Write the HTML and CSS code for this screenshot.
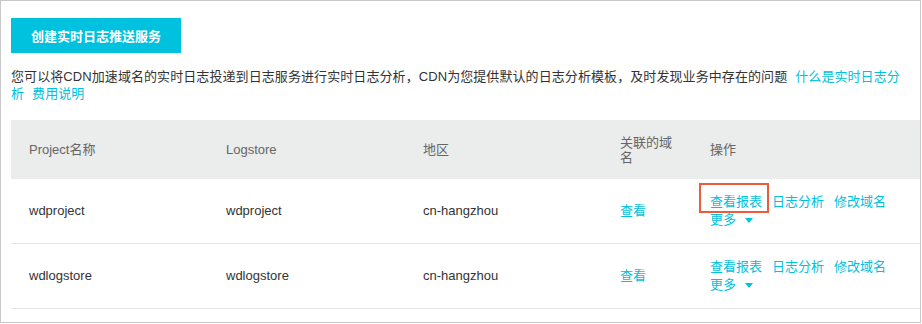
FILE: index.html
```html
<!DOCTYPE html>
<html lang="zh-CN">
<head>
    <meta charset="UTF-8">
    <meta name="viewport" content="width=device-width, initial-scale=1.0">
    <title>实时日志推送</title>
    <link rel="stylesheet" href="styles.css">
</head>
<body>
    <div class="panel">
        <button class="primary-button">创建实时日志推送服务</button>

        <p class="intro">您可以将CDN加速域名的实时日志投递到日志服务进行实时日志分析，CDN为您提供默认的日志分析模板，及时发现业务中存在的问题<a class="link intro-link" href="#">什么是实时日志分析</a><a class="link intro-link" href="#">费用说明</a></p>

        <table class="log-table">
            <colgroup>
                <col class="col-project">
                <col class="col-logstore">
                <col class="col-region">
                <col class="col-domain">
                <col class="col-actions">
            </colgroup>
            <thead>
                <tr>
                    <th>Project名称</th>
                    <th>Logstore</th>
                    <th>地区</th>
                    <th>关联的域名</th>
                    <th>操作</th>
                </tr>
            </thead>
            <tbody>
                <tr>
                    <td>wdproject</td>
                    <td>wdproject</td>
                    <td>cn-hangzhou</td>
                    <td><a class="link" href="#">查看</a></td>
                    <td class="actions"><a class="link action marked" href="#">查看报表<span class="mark"></span></a><a class="link action" href="#">日志分析</a><a class="link action" href="#">修改域名</a><a class="link action more" href="#">更多<span class="caret"></span></a></td>
                </tr>
                <tr>
                    <td>wdlogstore</td>
                    <td>wdlogstore</td>
                    <td>cn-hangzhou</td>
                    <td><a class="link" href="#">查看</a></td>
                    <td class="actions"><a class="link action" href="#">查看报表</a><a class="link action" href="#">日志分析</a><a class="link action" href="#">修改域名</a><a class="link action more" href="#">更多<span class="caret"></span></a></td>
                </tr>
            </tbody>
        </table>
    </div>
</body>
</html>
```

FILE: styles.css
```css
body {
    margin: 0;
    font-family: "Liberation Sans", Arial, "Noto Sans CJK SC", sans-serif;
    font-size: 13px;
    color: #333;
    background: #fff;
}
.panel {
    box-sizing: border-box;
    width: 921px;
    height: 323px;
    border: 1px solid #c8c8c8;
    padding: 17px 0 0 10px;
    overflow: hidden;
}
.primary-button {
    display: block;
    width: 170px;
    height: 35px;
    padding: 0;
    background-color: #00c1de;
    color: #fff;
    border: none;
    font-family: inherit;
    font-size: 13px;
    font-weight: bold;
    cursor: pointer;
}
.intro {
    margin: 15px 0 18px;
    line-height: 17px;
    padding-right: 8px;
    letter-spacing: 0.08px;
}
.link {
    color: #00c1de;
    text-decoration: none;
}
.intro-link {
    margin-left: 8px;
}
.log-table {
    width: 910px;
    border-collapse: collapse;
    table-layout: fixed;
}
.col-project,
.col-logstore,
.col-region {
    width: 197px;
}
.col-domain {
    width: 90px;
}
.log-table th {
    background-color: #ebecec;
    color: #666;
    font-weight: normal;
    text-align: left;
    height: 59px;
    padding: 0 18px;
    line-height: 15px;
    vertical-align: middle;
}
.log-table td {
    height: 64px;
    padding: 0 18px;
    line-height: 18px;
    border-bottom: 1px solid #e6e6e6;
    vertical-align: middle;
}
.log-table td.actions {
    padding-right: 14px;
}
.action {
    display: inline-block;
    margin-right: 10px;
}
.marked {
    position: relative;
}
.mark {
    position: absolute;
    top: -10px;
    bottom: -2px;
    left: -11px;
    right: -7px;
    border: 2px solid #ef5a3b;
}
.caret {
    display: inline-block;
    margin-left: 9px;
    vertical-align: middle;
    border-left: 4px solid transparent;
    border-right: 4px solid transparent;
    border-top: 5px solid #00c1de;
}
```
